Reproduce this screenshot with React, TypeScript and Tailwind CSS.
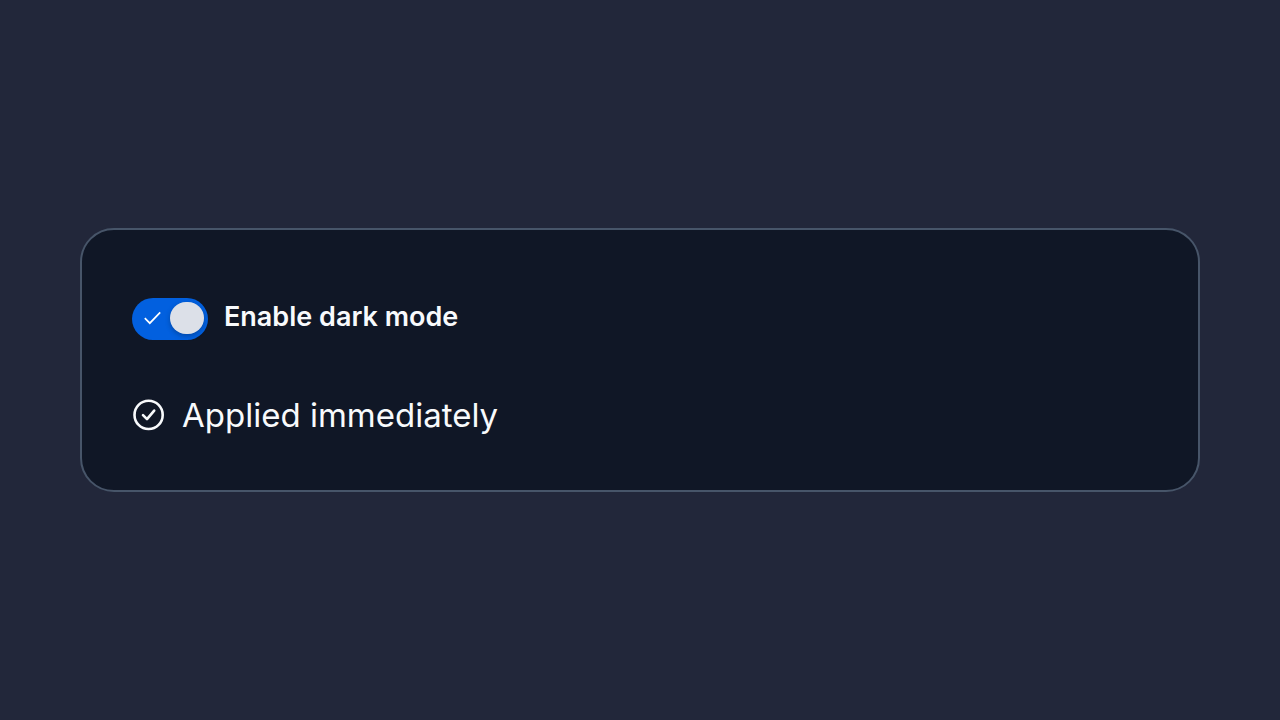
// REACT IMPORT
import React, { useState } from 'react'

const CheckCircleIcon = (): React.JSX.Element => (
  <svg
    viewBox="0 0 34 34"
    className="h-[34px] w-[34px] shrink-0"
    fill="none"
    stroke="currentColor"
    strokeLinecap="round"
    strokeLinejoin="round"
    aria-hidden="true"
  >
    <circle cx="16.6" cy="16.9" r="14.1" strokeWidth="2.6" />
    <path d="M11 17.2 L15 21.2 L22.2 12.6" strokeWidth="2.6" />
  </svg>
)

const DarkModeSwitch = (): React.JSX.Element => {
  const [enabled, setEnabled] = useState<boolean>(true)

  return (
    <div className="flex items-center gap-4">
      <div className="relative h-[42px] w-[76px] shrink-0">
        <input
          id="dark-mode"
          type="checkbox"
          role="switch"
          checked={enabled}
          onChange={() => setEnabled(!enabled)}
          className="peer block h-full w-full cursor-pointer appearance-none rounded-full bg-[#475569] checked:bg-[#0260df]"
        />
        <svg
          viewBox="0 0 18 14"
          className="pointer-events-none absolute left-3 top-[13px] h-[14px] w-[18px] opacity-0 peer-checked:opacity-100"
          fill="none"
          stroke="white"
          strokeWidth="1.7"
          aria-hidden="true"
        >
          <path d="M0.8 7.2 L5.8 12.2 L16.2 1.4" />
        </svg>
        <span className="pointer-events-none absolute left-1 top-1 h-8 w-[34px] rounded-full bg-[#dce0e8] shadow-[0_2px_5px_rgba(0,0,0,0.25)] peer-checked:left-auto peer-checked:right-1" />
      </div>
      <label htmlFor="dark-mode" className="cursor-pointer pb-1 text-[27px] font-semibold leading-8">
        Enable dark mode
      </label>
    </div>
  )
}

const App = (): React.JSX.Element => {
  return (
    <main className="flex min-h-screen items-center bg-[#22273a] px-20 font-['Inter',sans-serif] text-[#f8fafc]">
      <section className="flex w-full flex-col gap-[50px] rounded-[34px] border-2 border-[#475569] bg-[#101726] px-[50px] pb-[50px] pt-[68px]">
        <DarkModeSwitch />
        <p className="flex items-center gap-4 text-[33px] leading-[50px]">
          <CheckCircleIcon />
          Applied immediately
        </p>
      </section>
    </main>
  )
}

export default App
